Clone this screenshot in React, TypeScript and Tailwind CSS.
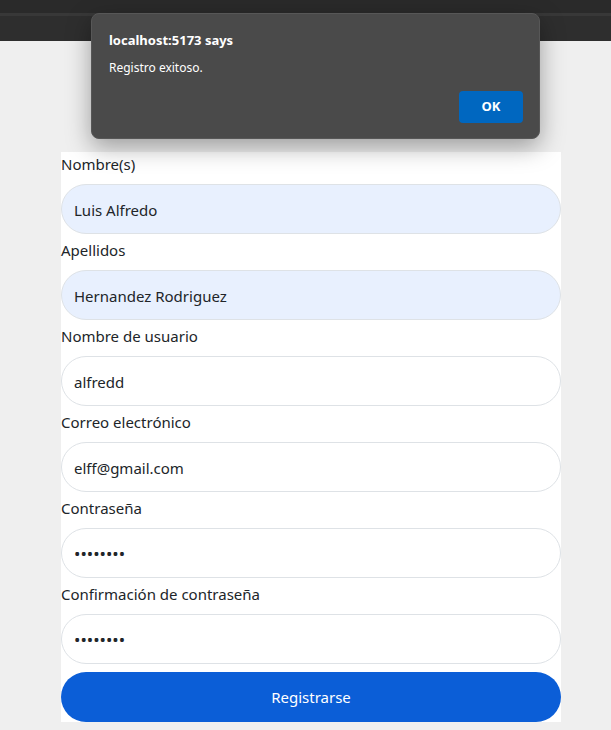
const fields = [
  { label: 'Nombre(s)', value: 'Luis Alfredo', type: 'text', autofill: true },
  { label: 'Apellidos', value: 'Hernandez Rodriguez', type: 'text', autofill: true },
  { label: 'Nombre de usuario', value: 'alfredd', type: 'text' },
  { label: 'Correo electrónico', value: 'elff@gmail.com', type: 'email' },
  { label: 'Contraseña', value: 'password', type: 'password' },
  { label: 'Confirmación de contraseña', value: 'password', type: 'password' },
];

function AlertDialog() {
  return (
    <div className="absolute left-[91px] top-[13px] w-[449px] h-[126px] rounded-lg bg-[#4a4a4a] border border-[#575757] shadow-[0_8px_24px_rgba(0,0,0,0.35)] font-['Noto_Sans',sans-serif] text-white">
      <div className="pl-[17px] pt-[16px] text-[13px] font-bold leading-5">localhost:5173 says</div>
      <div className="pl-[17px] pt-[8px] text-[12px] leading-5">Registro exitoso.</div>
      <div className="flex justify-end pr-[16px] pt-[13px]">
        <button className="w-16 h-8 rounded bg-[#0067c0] text-[13px] font-bold text-white">OK</button>
      </div>
    </div>
  );
}

export default function App() {
  return (
    <div className="relative min-h-[730px] bg-[#efefef] font-['Noto_Sans',sans-serif] text-[#212529]">
      <div className="h-[41px] bg-[#2e2e2e] border-t-[13px] border-[#2a2a2a]">
        <div className="h-[3px] bg-[#383838]" />
      </div>

      <form className="mx-[61px] mt-[111px] w-[500px] bg-white" onSubmit={(e) => e.preventDefault()}>
        {fields.map((f, i) => (
          <div key={f.label} className={i > 0 ? 'mt-1' : ''}>
            <label className="block text-[15px] leading-6 pb-2">{f.label}</label>
            <input
              type={f.type}
              defaultValue={f.value}
              className={`block w-full h-[50px] rounded-full border border-[#dee2e6] px-3 pt-px text-[#212529] outline-none ${
                f.type === 'password' ? 'text-[17px]' : 'text-[15px]'
              } ${f.autofill ? 'bg-[#e8f0fe]' : 'bg-white'}`}
            />
          </div>
        ))}
        <button
          type="submit"
          className="mt-2 w-full h-[50px] rounded-full bg-[#0b5ed7] text-white text-[15px]"
        >
          Registrarse
        </button>
      </form>

      <AlertDialog />
    </div>
  );
}
